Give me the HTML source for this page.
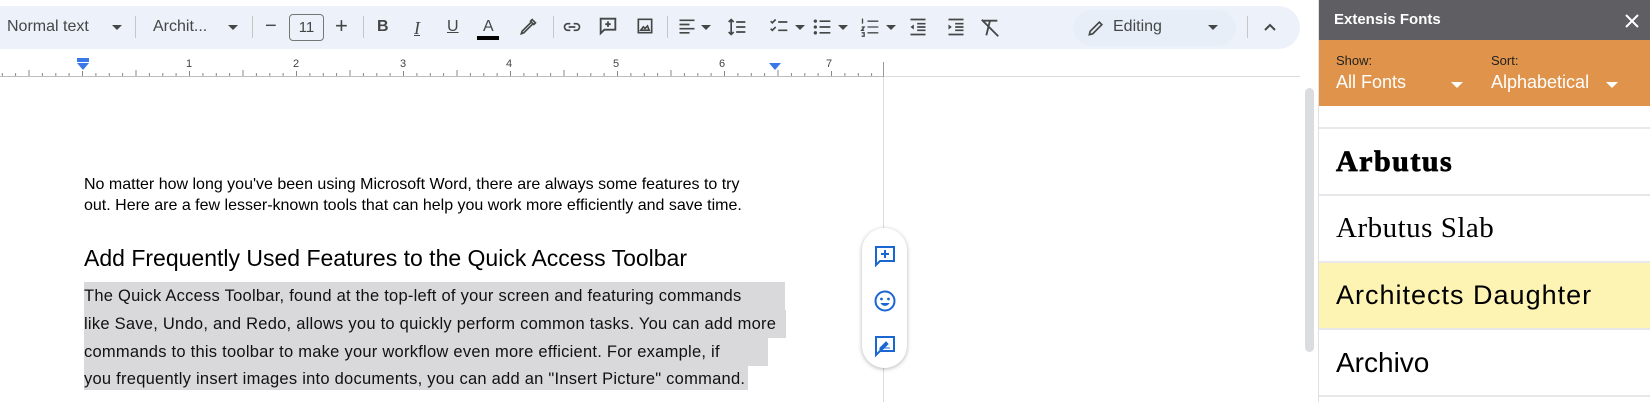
<!DOCTYPE html>
<html><head><meta charset="utf-8"><style>
*{box-sizing:border-box;margin:0;padding:0}
body{width:1650px;height:402px;overflow:hidden;background:#fff;font-family:"Liberation Sans",Arial,sans-serif;position:relative;color:#202124}
.abs{position:absolute}
.tb{left:0;top:6px;width:1300px;height:43px;background:#edf2fa;border-radius:0 24px 24px 0}
.ti{position:absolute;top:18px;font-size:16px;color:#444746}
.sep{position:absolute;top:16px;width:1px;height:22px;background:#c7c7c7}
.caret{position:absolute;top:25px;width:0;height:0;border-left:5px solid transparent;border-right:5px solid transparent;border-top:5px solid #444746}
.p{font-size:16px;color:#000;line-height:21px}
.hl{position:absolute;background:#d9d9db;height:28px}
.hw{font-size:16.5px;color:#111;letter-spacing:0.25px;position:absolute;left:84px;white-space:nowrap}
.row{position:absolute;left:1319px;width:331px;height:67px;border-bottom:2px solid #e8e8ea;padding-left:17px;display:flex;align-items:center;color:#000}
</style></head><body>
<div class="abs tb"></div>
<div class="ti" style="left:7px">Normal text</div><div class="caret" style="left:112px"></div>
<div class="sep" style="left:135px"></div>
<div class="ti" style="left:153px">Archit...</div><div class="caret" style="left:228px"></div>
<div class="sep" style="left:252px"></div>
<div class="ti" style="left:265px;font-size:20px;top:15px">−</div>
<div class="abs" style="left:289px;top:14px;width:35px;height:27px;border:1px solid #747775;border-radius:4px;font-size:15px;text-align:center;line-height:25px;color:#444746">11</div>
<div class="ti" style="left:335px;font-size:22px;top:13px">+</div>
<div class="sep" style="left:363px"></div>
<div class="ti" style="left:377px;font-weight:bold">B</div>
<div class="ti" style="left:414px;font-style:italic;font-family:'Liberation Serif',serif;font-size:18px;text-decoration:underline">I</div>
<div class="ti" style="left:447px;text-decoration:underline">U</div>
<div class="ti" style="left:483px">A</div><div class="abs" style="left:477px;top:36px;width:22px;height:4px;background:#000"></div>
<svg class="abs" style="left:518px;top:17px" width="20" height="20" viewBox="0 0 24 24"><path d="M4 20l3-1 11-11-2-2L5 17z M15 5l2-2 4 4-2 2z" fill="none" stroke="#444746" stroke-width="2"/></svg>
<div class="sep" style="left:553px"></div>
<svg class="abs" style="left:561px;top:17px" width="22" height="20" viewBox="0 0 24 24"><path d="M10 8H7a4 4 0 000 8h3M14 8h3a4 4 0 010 8h-3M8 12h8" fill="none" stroke="#444746" stroke-width="2"/></svg>
<svg class="abs" style="left:597px;top:15px" width="22" height="22" viewBox="0 0 24 24"><path d="M4 4h16v12H8l-4 4z M12 7v6M9 10h6" fill="none" stroke="#444746" stroke-width="2"/></svg>
<svg class="abs" style="left:635px;top:16px" width="20" height="20" viewBox="0 0 24 24"><path d="M4 4h16v16H4z M7 17l3-4 2 2 3-3 2 5z" fill="none" stroke="#444746" stroke-width="2"/></svg>
<div class="sep" style="left:667px"></div>
<svg class="abs" style="left:677px;top:17px" width="20" height="20" viewBox="0 0 24 24"><path d="M3 4h18M3 9h12M3 14h18M3 19h12" stroke="#444746" stroke-width="2"/></svg><div class="caret" style="left:701px"></div>
<svg class="abs" style="left:726px;top:17px" width="22" height="20" viewBox="0 0 24 24"><path d="M5 3v18M2 6l3-3 3 3M2 18l3 3 3-3M11 6h11M11 12h11M11 18h11" fill="none" stroke="#444746" stroke-width="2"/></svg>
<svg class="abs" style="left:768px;top:17px" width="22" height="20" viewBox="0 0 24 24"><path d="M2 5l2 2 4-4M2 14l2 2 4-4M11 6h11M11 16h11" fill="none" stroke="#444746" stroke-width="2"/></svg><div class="caret" style="left:795px"></div>
<svg class="abs" style="left:811px;top:17px" width="22" height="20" viewBox="0 0 24 24"><circle cx="4" cy="5" r="2" fill="#444746"/><circle cx="4" cy="12" r="2" fill="#444746"/><circle cx="4" cy="19" r="2" fill="#444746"/><path d="M9 5h13M9 12h13M9 19h13" stroke="#444746" stroke-width="2"/></svg><div class="caret" style="left:838px"></div>
<svg class="abs" style="left:859px;top:17px" width="22" height="20" viewBox="0 0 24 24"><path d="M3 2v6M2 12h3l-3 4h3M2 19h3v4H2M9 5h13M9 12h13M9 19h13" fill="none" stroke="#444746" stroke-width="1.6"/></svg><div class="caret" style="left:886px"></div>
<svg class="abs" style="left:907px;top:17px" width="22" height="20" viewBox="0 0 24 24"><path d="M3 3h18M11 8h10M11 12h10M11 16h10M3 21h18" stroke="#444746" stroke-width="2"/><path d="M7 9v6l-4-3z" fill="#444746"/></svg>
<svg class="abs" style="left:945px;top:17px" width="22" height="20" viewBox="0 0 24 24"><path d="M3 3h18M11 8h10M11 12h10M11 16h10M3 21h18" stroke="#444746" stroke-width="2"/><path d="M3 9v6l4-3z" fill="#444746"/></svg>
<svg class="abs" style="left:979px;top:17px" width="22" height="22" viewBox="0 0 24 24"><path d="M4 4h16M12 4l-4 16M3 3l18 18" fill="none" stroke="#444746" stroke-width="2"/></svg>
<div class="abs" style="left:1073px;top:10px;width:163px;height:36px;background:#e8eef8;border-radius:18px"></div>
<svg class="abs" style="left:1086px;top:18px" width="20" height="20" viewBox="0 0 24 24"><path d="M4 20l1-4L16 5l3 3L8 19z" fill="none" stroke="#444746" stroke-width="2"/></svg>
<div class="ti" style="left:1113px">Editing</div><div class="caret" style="left:1208px"></div>
<div class="sep" style="left:1247px"></div>
<svg class="abs" style="left:1262px;top:20px" width="16" height="14" viewBox="0 0 16 14"><path d="M3 10l5-5 5 5" fill="none" stroke="#444746" stroke-width="2"/></svg>

<svg class="abs" style="left:0;top:56px" width="1300" height="22">
<defs><pattern id="rp" x="-25" y="0" width="107" height="22" patternUnits="userSpaceOnUse">
<path d="M0.5 20v-5M13.9 20v-3M27.3 20v-3M40.6 20v-3M54 20v-6M67.4 20v-3M80.8 20v-3M94.1 20v-3" stroke="#888" stroke-width="1"/>
</pattern></defs>
<rect x="0" y="0" width="884" height="21" fill="url(#rp)"/>
<line x1="0" y1="20.5" x2="884" y2="20.5" stroke="#bdbdbd"/>
<line x1="884" y1="20.5" x2="1300" y2="20.5" stroke="#dadce0"/>
<line x1="883.5" y1="6" x2="883.5" y2="21" stroke="#999"/>
<g font-size="11" fill="#444" font-family="Liberation Sans">
<text x="186" y="11">1</text><text x="293" y="11">2</text><text x="400" y="11">3</text><text x="506" y="11">4</text><text x="613" y="11">5</text><text x="719" y="11">6</text><text x="826" y="11">7</text></g>
<rect x="77" y="2" width="12" height="4" fill="#3b78e7"/><path d="M77 7h12l-6 7z" fill="#3b78e7"/>
<path d="M769 7h12l-6 7z" fill="#3b78e7"/>
</svg>

<div class="abs" style="left:883px;top:77px;width:1px;height:325px;background:#dadce0"></div>
<div class="abs" style="left:1305px;top:88px;width:9px;height:264px;background:#dadce0;border-radius:5px"></div>

<div class="abs p" style="left:84px;top:174px">No matter how long you've been using Microsoft Word, there are always some features to try<br>out. Here are a few lesser-known tools that can help you work more efficiently and save time.</div>
<div class="abs" style="left:84px;top:245px;font-size:23px;color:#000">Add Frequently Used Features to the Quick Access Toolbar</div>

<div class="hl" style="left:84px;top:282px;width:701px"></div>
<div class="hl" style="left:84px;top:310px;width:702px"></div>
<div class="hl" style="left:84px;top:338px;width:684px"></div>
<div class="hl" style="left:84px;top:366px;width:664px;height:24px"></div>
<div class="hw" style="top:287px">The Quick Access Toolbar, found at the top-left of your screen and featuring commands</div>
<div class="hw" style="top:315px">like Save, Undo, and Redo, allows you to quickly perform common tasks. You can add more</div>
<div class="hw" style="top:343px">commands to this toolbar to make your workflow even more efficient. For example, if</div>
<div class="hw" style="top:370px">you frequently insert images into documents, you can add an "Insert Picture" command.</div>

<div class="abs" style="left:862px;top:228px;width:45px;height:140px;background:#fff;border-radius:23px;box-shadow:0 1px 4px rgba(0,0,0,.3)"></div>
<svg class="abs" style="left:873px;top:244px" width="24" height="24" viewBox="0 0 24 24"><path d="M3 3h18v14H7l-4 4z M12 6v8M8 10h8" fill="none" stroke="#1a66d2" stroke-width="2"/></svg>
<svg class="abs" style="left:873px;top:289px" width="24" height="24" viewBox="0 0 24 24"><circle cx="12" cy="12" r="9.5" fill="none" stroke="#1a66d2" stroke-width="2"/><circle cx="8.5" cy="10" r="1.4" fill="#1a66d2"/><circle cx="15.5" cy="10" r="1.4" fill="#1a66d2"/><path d="M7.5 14a5 5 0 009 0z" fill="#1a66d2"/></svg>
<svg class="abs" style="left:873px;top:334px" width="24" height="24" viewBox="0 0 24 24"><path d="M3 3h18v14H7l-4 4z" fill="none" stroke="#1a66d2" stroke-width="2"/><path d="M7 14l6-6 2 2-6 6H7z M11 14h6" fill="#1a66d2" stroke="#1a66d2" stroke-width="1"/></svg>

<div class="abs" style="left:1318px;top:0;width:1px;height:402px;background:#e0e0e0"></div>
<div class="abs" style="left:1319px;top:0;width:331px;height:40px;background:#5f5e62"></div>
<div class="abs" style="left:1334px;top:11px;font-size:15px;font-weight:bold;color:#fff">Extensis Fonts</div>
<svg class="abs" style="left:1624px;top:13px" width="16" height="16" viewBox="0 0 16 16"><path d="M2 2l12 12M14 2L2 14" stroke="#fff" stroke-width="2"/></svg>
<div class="abs" style="left:1319px;top:40px;width:331px;height:66px;background:#e0934a"></div>
<div class="abs" style="left:1336px;top:53px;font-size:13px;color:#222">Show:</div>
<div class="abs" style="left:1491px;top:53px;font-size:13px;color:#222">Sort:</div>
<div class="abs" style="left:1336px;top:72px;font-size:18px;color:#fff">All Fonts</div>
<div class="abs" style="left:1491px;top:72px;font-size:18px;color:#fff">Alphabetical</div>
<div class="abs" style="left:1451px;top:82px;border-left:6px solid transparent;border-right:6px solid transparent;border-top:6px solid #fff"></div>
<div class="abs" style="left:1606px;top:82px;border-left:6px solid transparent;border-right:6px solid transparent;border-top:6px solid #fff"></div>
<div class="row" style="top:106px;height:23px"></div>
<div class="row" style="top:129px;font-family:'Liberation Serif',serif;font-weight:bold;font-size:30px;letter-spacing:1.5px;-webkit-text-stroke:0.8px #000">Arbutus</div>
<div class="row" style="top:196px;font-family:'Liberation Serif',serif;font-size:29px;letter-spacing:0.5px">Arbutus Slab</div>
<div class="row" style="top:263px;background:#fdf4b4;font-size:27px;letter-spacing:1px">Architects Daughter</div>
<div class="row" style="top:330px;font-size:28px">Archivo</div>
</body></html>
